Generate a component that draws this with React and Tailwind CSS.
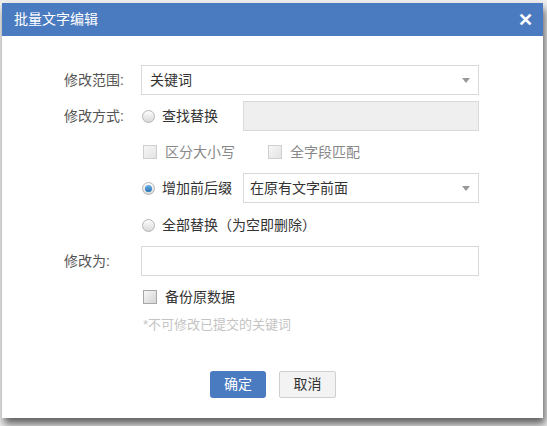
import React from "react";

const font = { fontFamily: '"Liberation Sans", "Noto Sans CJK SC", sans-serif' };

function Radio({ checked }) {
  return (
    <span className="relative inline-block w-[13px] h-[13px] rounded-full border border-[#b5b5b5] bg-gradient-to-b from-[#fdfdfd] to-[#d9d9d9] shrink-0">
      {checked && (
        <span className="absolute left-[2px] top-[2px] w-[7px] h-[7px] rounded-full bg-gradient-to-b from-[#6fb3e6] to-[#1f6fb0]" />
      )}
    </span>
  );
}

function Check({ dim }) {
  return (
    <span
      className={
        "inline-block w-[14px] h-[14px] border shrink-0 bg-gradient-to-br " +
        (dim
          ? "border-[#cfcfcf] from-[#f7f7f7] to-[#e3e3e3]"
          : "border-[#a8a8a8] from-[#f7f7f7] to-[#d4d4d4]")
      }
    />
  );
}

function Arrow() {
  return (
    <span className="w-0 h-0 border-l-[4px] border-r-[4px] border-t-[5px] border-l-transparent border-r-transparent border-t-[#999]" />
  );
}

export default function App() {
  return (
    <div className="w-[547px] h-[426px] bg-[#eeeeee] overflow-hidden" style={font}>
      <div className="ml-[2px] mt-[3px] w-[541px] h-[415px] bg-white shadow-[2px_6px_8px_rgba(0,0,0,0.6)]">
        {/* 标题栏 */}
        <div className="h-[33px] bg-[#4a7abf] flex items-center justify-between pl-[12px] pr-[10px]">
          <span className="text-white text-[14px]">批量文字编辑</span>
          <span className="text-white text-[18px] font-bold leading-none">✕</span>
        </div>

        <div className="pl-[62px] pr-[64px] pt-[29px] text-[14px] text-[#333]">
          {/* 修改范围 */}
          <div className="flex items-center h-[30px]">
            <span className="w-[77px] text-[#555]">修改范围:</span>
            <div className="flex-1 h-[30px] border border-[#d9d9d9] flex items-center justify-between pl-[8px] pr-[8px]">
              <span>关键词</span>
              <Arrow />
            </div>
          </div>

          {/* 修改方式 */}
          <div className="flex items-center h-[30px] mt-[6px]">
            <span className="w-[77px] text-[#555]">修改方式:</span>
            <div className="flex items-center gap-[7px] w-[102px] pl-[1px]">
              <Radio />
              <span>查找替换</span>
            </div>
            <div className="flex-1 h-[30px] border border-[#d9d9d9] bg-[#efefef]" />
          </div>

          {/* 选项 */}
          <div className="flex items-center h-[30px] mt-[6px] pl-[79px] text-[#888]">
            <div className="flex items-center gap-[8px] w-[125px]">
              <Check dim />
              <span>区分大小写</span>
            </div>
            <div className="flex items-center gap-[8px]">
              <Check dim />
              <span>全字段匹配</span>
            </div>
          </div>

          {/* 增加前后缀 */}
          <div className="flex items-center h-[30px] mt-[6px] pl-[78px]">
            <div className="flex items-center gap-[7px] w-[101px]">
              <Radio checked />
              <span>增加前后缀</span>
            </div>
            <div className="flex-1 h-[30px] border border-[#d9d9d9] flex items-center justify-between pl-[6px] pr-[8px]">
              <span>在原有文字前面</span>
              <Arrow />
            </div>
          </div>

          {/* 全部替换 */}
          <div className="flex items-center h-[30px] mt-[7px] pl-[78px] gap-[7px]">
            <Radio />
            <span>全部替换（为空即删除）</span>
          </div>

          {/* 修改为 */}
          <div className="flex items-center h-[30px] mt-[6px]">
            <span className="w-[77px] text-[#555]">修改为:</span>
            <div className="flex-1 h-[30px] border border-[#d9d9d9]" />
          </div>

          {/* 备份 */}
          <div className="flex items-center h-[24px] mt-[9px] pl-[79px] gap-[8px]">
            <Check />
            <span>备份原数据</span>
          </div>

          <div className="h-[20px] mt-[6px] pl-[79px] flex items-center text-[#c4c4c4] text-[13px]">
            *不可修改已提交的关键词
          </div>
        </div>

        {/* 按钮 */}
        <div className="flex justify-center gap-[13px] mt-[36px] pl-[1px]">
          <button className="w-[56px] h-[27px] rounded-[3px] bg-[#4a7abf] text-white text-[14px]">确定</button>
          <button className="w-[57px] h-[27px] rounded-[2px] border border-[#cfcfcf] bg-[#f3f3f3] text-[#333] text-[14px]">取消</button>
        </div>
      </div>
    </div>
  );
}
